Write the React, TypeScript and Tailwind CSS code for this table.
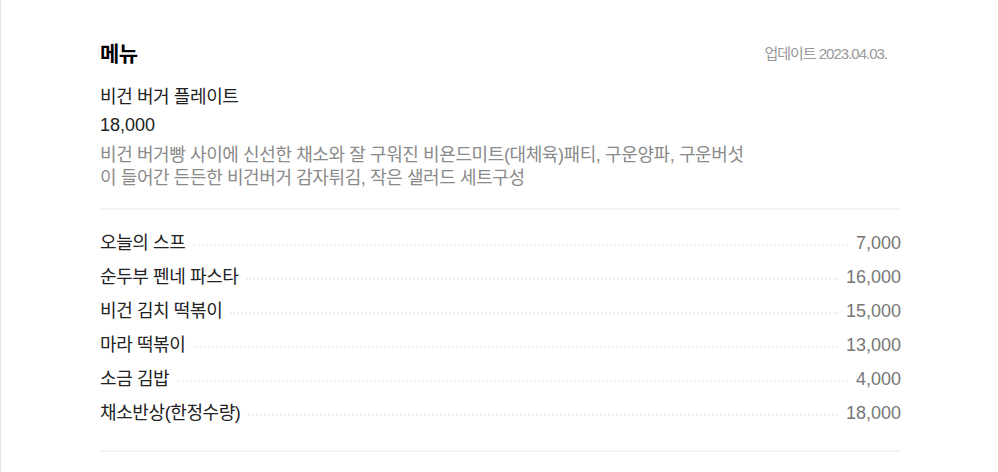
import React from "react";

const items: [string, string][] = [
  ["오늘의 스프", "7,000"],
  ["순두부 펜네 파스타", "16,000"],
  ["비건 김치 떡볶이", "15,000"],
  ["마라 떡볶이", "13,000"],
  ["소금 김밥", "4,000"],
  ["채소반상(한정수량)", "18,000"],
];

export default function App() {
  return (
    <div
      className="w-[998px] h-[472px] bg-white border-l border-[#e6e6e6] overflow-hidden"
      style={{ fontFamily: '"Liberation Sans", "Noto Sans CJK KR", sans-serif' }}
    >
      <div className="ml-[99px] w-[801px] pt-[40px]">
        <div className="flex items-center justify-between">
          <h2 className="text-[21px] leading-[28px] font-bold text-black tracking-[-0.5px]">메뉴</h2>
          <span className="text-[15px] text-[#999] tracking-[-1px] mr-[14px]">업데이트 2023.04.03.</span>
        </div>
        <div className="mt-[15px] text-[18px] leading-[28px] text-[#222] tracking-[-0.4px]">비건 버거 플레이트</div>
        <div className="text-[18px] leading-[28px] text-[#222]">18,000</div>
        <p className="mt-[5px] text-[18px] leading-[23px] text-[#8a8a8a] tracking-[-0.4px]">
          비건 버거빵 사이에 신선한 채소와 잘 구워진 비욘드미트(대체육)패티, 구운양파, 구운버섯
          <br />
          이 들어간 든든한 비건버거 감자튀김, 작은 샐러드 세트구성
        </p>
        <div className="mt-[18px] h-[2px] bg-[#f4f4f4]" />
        <ul className="pt-[16px]">
          {items.map(([name, price]) => (
            <li key={name} className="flex items-center h-[34px] text-[18px]">
              <span className="text-[#222] tracking-[-0.4px]">{name}</span>
              <span className="flex-1 mx-[8px] border-b-2 border-dotted border-[#eeeeee] translate-y-[2px]" />
              <span className="text-[#777]">{price}</span>
            </li>
          ))}
        </ul>
        <div className="mt-[20px] h-[2px] bg-[#f4f4f4]" />
      </div>
    </div>
  );
}
